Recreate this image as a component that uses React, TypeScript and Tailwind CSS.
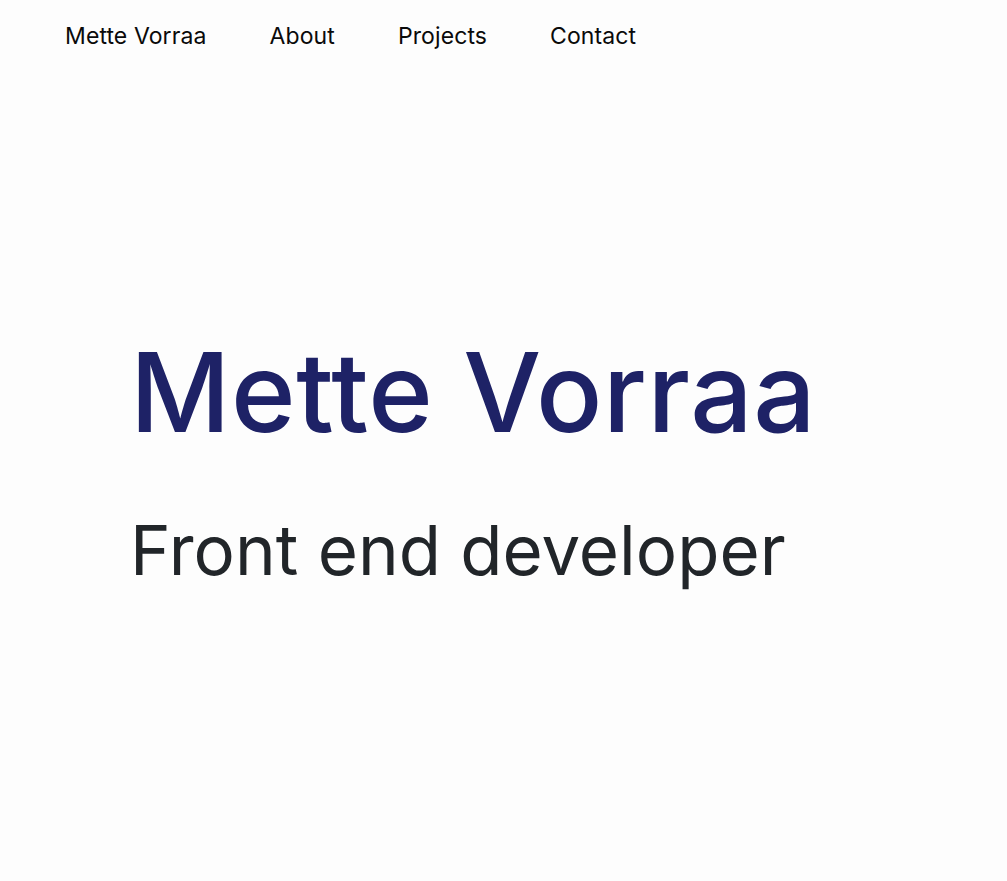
export default function App() {
  return (
    <div className="min-h-[881px] bg-[#fdfdfd] text-[#0a0a0a]" style={{ fontFamily: "Inter, 'Noto Sans', sans-serif" }}>
      <nav className="flex items-center gap-[63px] pl-[65px] pt-[20px] text-[23px] leading-[32px] tracking-[0.1px]">
        <a>Mette Vorraa</a>
        <a>About</a>
        <a>Projects</a>
        <a>Contact</a>
      </nav>
      <main className="pl-[130px] pt-[274px]">
        <h1 className="text-[110px] leading-[1.2] font-medium tracking-[0.6px] text-[#1e2266]">Mette Vorraa</h1>
        <p className="mt-[51px] text-[69px] leading-[1.2] text-[#212529]">Front end developer</p>
      </main>
    </div>
  );
}
